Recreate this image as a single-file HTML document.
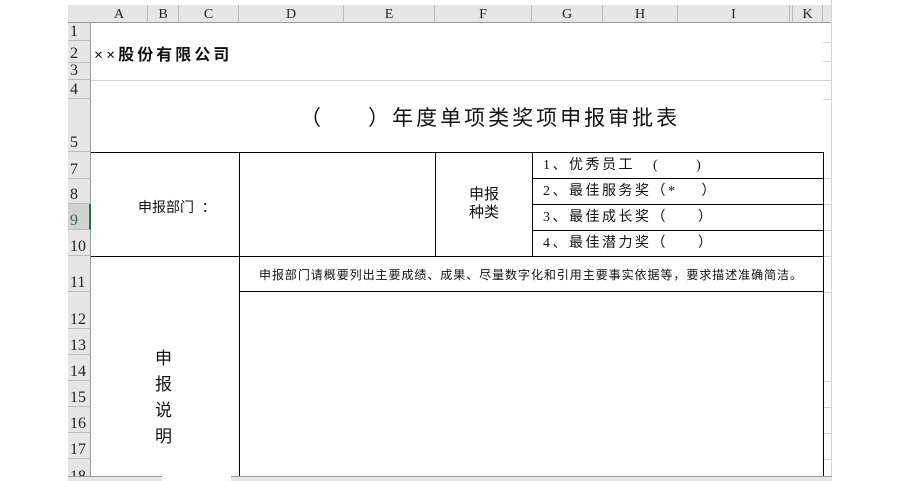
<!DOCTYPE html>
<html><head><meta charset="utf-8"><style>
body{margin:0;width:900px;height:480px;background:#fff;position:relative;overflow:hidden;font-family:"Liberation Sans","Noto Sans CJK SC",sans-serif;}
.a{position:absolute;}
.hd{background:#e6e6e6;}
.ch{position:absolute;top:5px;height:18px;font:14px "Liberation Serif","Noto Serif CJK SC",serif;color:#222;text-align:center;line-height:20px;border-right:1px solid #bbb;box-sizing:border-box;}
.rh{position:absolute;left:68px;width:23px;font:16px "Liberation Serif",serif;color:#222;box-sizing:border-box;border-bottom:1px solid #bbb;display:flex;align-items:flex-end;padding-left:2px;line-height:16px;overflow:hidden;}
.hl{position:absolute;height:1px;background:#000;}
.vl{position:absolute;width:1px;background:#000;}
.g{position:absolute;height:1px;background:#d4d4d4;left:823px;width:9px;}
.t{position:absolute;font-size:14px;color:#111;white-space:nowrap;}
.op{position:absolute;font-size:14px;color:#111;white-space:nowrap;font-family:'Liberation Serif','Noto Sans CJK SC',serif;letter-spacing:2.5px}
</style></head><body>
<div class="a hd" style="left:68px;top:5px;width:764px;height:18px;border-bottom:1px solid #999;box-sizing:border-box"></div>
<div class="a hd" style="left:68px;top:23px;width:23px;height:453px;border-right:1px solid #999;box-sizing:border-box"></div>
<div class="ch" style="left:91px;width:57px">A</div>
<div class="ch" style="left:148px;width:31px">B</div>
<div class="ch" style="left:179px;width:60px">C</div>
<div class="ch" style="left:239px;width:105px">D</div>
<div class="ch" style="left:344px;width:91px">E</div>
<div class="ch" style="left:435px;width:97px">F</div>
<div class="ch" style="left:532px;width:71px">G</div>
<div class="ch" style="left:603px;width:75px">H</div>
<div class="ch" style="left:678px;width:112px">I</div>
<div class="ch" style="left:790px;width:3px"></div>
<div class="ch" style="left:793px;width:30px">K</div>
<div class="rh" style="top:23px;height:18px">1</div>
<div class="rh" style="top:41px;height:22px">2</div>
<div class="rh" style="top:63px;height:17px">3</div>
<div class="rh" style="top:80px;height:19px">4</div>
<div class="rh" style="top:99px;height:53px">5</div>
<div class="rh" style="top:152px;height:27px">7</div>
<div class="rh" style="top:179px;height:25px">8</div>
<div class="rh" style="top:204px;height:26px;color:#217346;border-right:2px solid #217346;background:#d2d2d2">9</div>
<div class="rh" style="top:230px;height:26px">10</div>
<div class="rh" style="top:256px;height:36px">11</div>
<div class="rh" style="top:292px;height:37px">12</div>
<div class="rh" style="top:329px;height:26px">13</div>
<div class="rh" style="top:355px;height:26px">14</div>
<div class="rh" style="top:381px;height:26px">15</div>
<div class="rh" style="top:407px;height:26px">16</div>
<div class="rh" style="top:433px;height:26px">17</div>
<div class="rh" style="top:459px;height:17px;border:none;align-items:flex-start;padding-top:10px">18</div>
<div class="a" style="left:91px;top:80px;width:741px;height:1px;background:#d4d4d4"></div>
<div class="g" style="top:42px"></div><div class="g" style="top:61px"></div><div class="g" style="top:99px"></div>
<div class="g" style="top:178px"></div><div class="g" style="top:204px"></div><div class="g" style="top:230px"></div><div class="g" style="top:256px"></div><div class="g" style="top:292px"></div>
<div class="g" style="top:381px"></div><div class="g" style="top:407px"></div><div class="g" style="top:433px"></div><div class="g" style="top:459px"></div>
<div class="a" style="left:831px;top:0;width:1px;height:476px;background:#d4d4d4"></div>
<div class="t" style="left:94px;top:41px;font-size:16px;font-family:'Liberation Serif','Noto Sans CJK SC',serif;letter-spacing:3px;font-weight:bold">××股份有限公司</div>
<div class="t" style="left:300px;top:102px;font-size:21px;letter-spacing:3px">（&nbsp;&nbsp;&nbsp;&nbsp;&nbsp;）年度单项类奖项申报审批表</div>
<div class="hl" style="left:91px;top:152px;width:733px"></div>
<div class="hl" style="left:532px;top:178px;width:292px"></div>
<div class="hl" style="left:532px;top:204px;width:292px"></div>
<div class="hl" style="left:532px;top:230px;width:292px"></div>
<div class="hl" style="left:91px;top:256px;width:733px"></div>
<div class="hl" style="left:239px;top:291px;width:585px"></div>
<div class="vl" style="left:239px;top:152px;height:324px"></div>
<div class="vl" style="left:435px;top:152px;height:104px"></div>
<div class="vl" style="left:532px;top:152px;height:104px"></div>
<div class="vl" style="left:823px;top:152px;height:324px"></div>
<div class="t" style="left:138px;top:197px">申报部门&nbsp;&nbsp;：</div>
<div class="t" style="left:469px;top:186px;line-height:18px;font-size:15px">申报<br>种类</div>
<div class="op" style="left:543px;top:154px">1、优秀员工&nbsp;&nbsp;&nbsp;(&nbsp;&nbsp;&nbsp;&nbsp;&nbsp;&nbsp;)</div>
<div class="op" style="left:543px;top:180px">2、最佳服务奖（*&nbsp;&nbsp;&nbsp;&nbsp;）</div>
<div class="op" style="left:543px;top:206px">3、最佳成长奖（&nbsp;&nbsp;&nbsp;&nbsp;&nbsp;）</div>
<div class="op" style="left:543px;top:232px">4、最佳潜力奖（&nbsp;&nbsp;&nbsp;&nbsp;&nbsp;）</div>
<div class="t" style="left:259px;top:266px;font-size:12px;letter-spacing:0.95px">申报部门请概要列出主要成绩、成果、尽量数字化和引用主要事实依据等，要求描述准确简洁。</div>
<div class="t" style="left:155px;top:346px;font-size:17px;line-height:26px;width:20px;white-space:normal">申<br>报<br>说<br>明</div>
<div class="a" style="left:68px;top:476px;width:94px;height:4px;background:#e6e6e6;border-top:1px solid #999"></div>
<div class="a" style="left:231px;top:476px;width:601px;height:4px;background:#e6e6e6;border-top:1px solid #999"></div>
</body></html>
